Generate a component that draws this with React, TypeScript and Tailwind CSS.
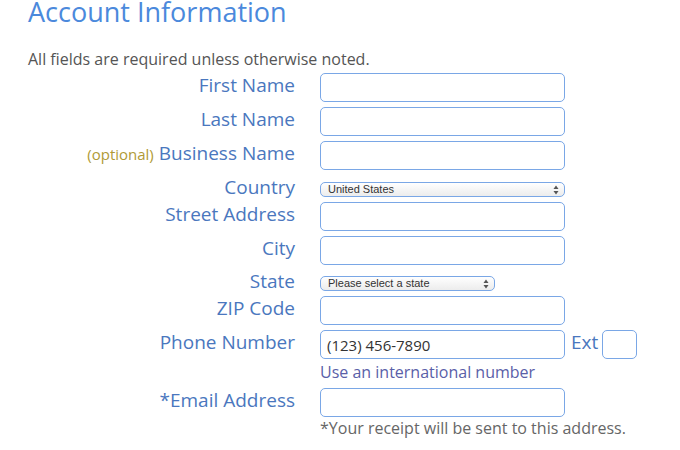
import type { ReactNode } from "react";

const font = { fontFamily: '"Open Sans", "Liberation Sans", sans-serif' };

const Arrows = () => (
  <svg width="6" height="10" viewBox="0 0 6 10" className="pointer-events-none absolute right-[6px] top-[3px]">
    <path d="M3 0.5 L5.5 4 L0.5 4 Z" fill="#555" />
    <path d="M3 9.5 L5.5 6 L0.5 6 Z" fill="#555" />
  </svg>
);

type RowProps = {
  label: ReactNode;
  children: ReactNode;
  select?: boolean;
  className?: string;
};

const Row = ({ label, children, select, className }: RowProps) => (
  <div className={`flex items-start ${className ?? ""}`}>
    <div
      className={`w-[295px] shrink-0 text-right text-[19px] text-[#4a77be] whitespace-nowrap ${
        select ? "mt-[-4px] leading-[19px]" : "mt-[2px] leading-[20px]"
      }`}
    >
      {label}
    </div>
    <div className="ml-[25px]">{children}</div>
  </div>
);

const TextInput = ({ w = "w-[245px]", value }: { w?: string; value?: string }) => (
  <input
    defaultValue={value}
    className={`${w} block h-[29px] rounded-[5px] border-[1.5px] border-[#7aa7e6] bg-white px-[6px] text-[15px] text-[#333] outline-none`}
    style={font}
  />
);

const Select = ({ w, text }: { w: string; text: string }) => (
  <div className={`relative h-[15px] ${w}`}>
    <select
      className="block h-[15px] w-full appearance-none rounded-[5px] border border-[#7aa7e6] bg-gradient-to-b from-white to-[#ececec] py-0 pl-[7px] text-[11px] leading-[13px] text-[#333] outline-none"
      style={{ fontFamily: '"Liberation Sans", Arial, sans-serif' }}
    >
      <option>{text}</option>
    </select>
    <Arrows />
  </div>
);

export default function App() {
  return (
    <div className="h-[450px] w-[680px] overflow-hidden bg-white" style={font}>
      <div className="pl-[28px]">
        <h1 className="mt-[-2px] text-[27px] leading-[28px] font-normal text-[#4b89dc]">Account Information</h1>
        <p className="mt-[23px] text-[16px] leading-[20px] text-[#555]">All fields are required unless otherwise noted.</p>
      </div>

      <div className="mt-[4px] flex flex-col gap-[5px]">
        <Row label="First Name">
          <TextInput />
        </Row>
        <Row label="Last Name">
          <TextInput />
        </Row>
        <Row
          label={
            <>
              <span className="text-[15px] text-[#b09a36]">(optional)</span> Business Name
            </>
          }
        >
          <TextInput />
        </Row>
        <Row label="Country" select className="mt-[7px]">
          <Select w="w-[245px]" text="United States" />
        </Row>
        <Row label="Street Address">
          <TextInput />
        </Row>
        <Row label="City">
          <TextInput />
        </Row>
        <Row label="State" select className="mt-[6px]">
          <Select w="w-[175px]" text="Please select a state" />
        </Row>
        <Row label="ZIP Code">
          <TextInput />
        </Row>
        <Row label="Phone Number">
          <div className="flex items-start">
            <TextInput value="(123) 456-7890" />
            <span className="ml-[6px] mt-[2px] text-[19px] leading-[20px] text-[#4a77be]">Ext</span>
            <input className="ml-[4px] block h-[29px] w-[35px] rounded-[5px] border-[1.5px] border-[#7aa7e6] bg-white outline-none" />
          </div>
          <p className="mt-[2px] text-[16px] leading-[22px] text-[#5a60a8]">Use an international number</p>
        </Row>
        <Row label="*Email Address">
          <TextInput />
          <p className="text-[16px] leading-[22px] whitespace-nowrap text-[#666]">*Your receipt will be sent to this address.</p>
        </Row>
      </div>
    </div>
  );
}
